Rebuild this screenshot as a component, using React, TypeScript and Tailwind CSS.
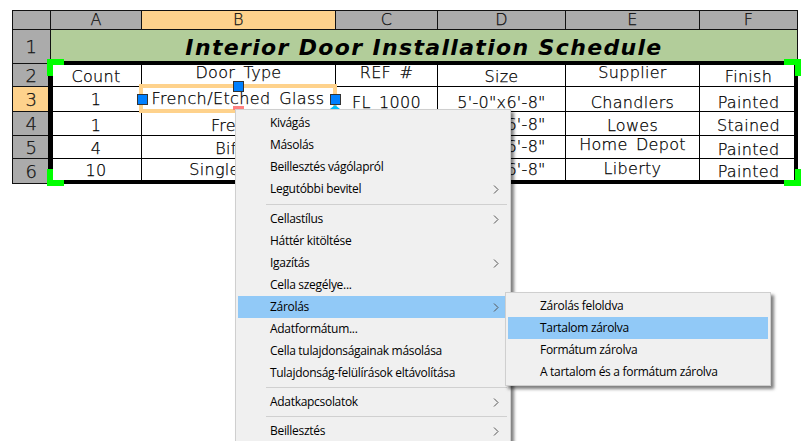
const cadFont = "[font-family:'DejaVu_Sans',sans-serif] font-extralight [-webkit-text-stroke:0.25px_black]";

const mainItems = [
  { label: "Kivágás" },
  { label: "Másolás" },
  { label: "Beillesztés vágólapról" },
  { label: "Legutóbbi bevitel", arrow: true },
  { sep: "h-[8px]" },
  { label: "Cellastílus", arrow: true },
  { label: "Háttér kitöltése" },
  { label: "Igazítás", arrow: true },
  { label: "Cella szegélye..." },
  { label: "Zárolás", arrow: true, active: true },
  { label: "Adatformátum..." },
  { label: "Cella tulajdonságainak másolása" },
  { label: "Tulajdonság-felülírások eltávolítása" },
  { sep: "h-[7px]" },
  { label: "Adatkapcsolatok", arrow: true },
  { sep: "h-[7px]" },
  { label: "Beillesztés", arrow: true },
];

const subItems = [
  { label: "Zárolás feloldva" },
  { label: "Tartalom zárolva", active: true },
  { label: "Formátum zárolva" },
  { label: "A tartalom és a formátum zárolva" },
];

const rows = [
  [
    ["Count", "pt-[4px]"],
    ["Door Type", "pb-[4px]"],
    ["REF #", "pb-[4px]"],
    ["Size", "pt-[4px]"],
    ["Supplier", "pb-[4px]"],
    ["Finish", "pt-[4px]"],
  ],
  [
    ["1", "pt-[2px]"],
    ["", ""],
    ["FL 1000", "pt-[8px]"],
    ["5'-0\"x6'-8\"", "pt-[8px]"],
    ["Chandlers", "pt-[8px]"],
    ["Painted", "pt-[8px]"],
  ],
  [
    ["1", "pt-[4px]"],
    ["French", "pt-[4px]"],
    ["", ""],
    ["2'-6\"x6'-8\"", "pt-[2px]"],
    ["Lowes", "pt-[4px]"],
    ["Stained", "pt-[4px]"],
  ],
  [
    ["4", "pt-[3px]"],
    ["Bifold", "pt-[3px]"],
    ["", ""],
    ["2'-6\"x6'-8\"", "pb-[1px]"],
    ["Home Depot", "pb-[5px]"],
    ["Painted", "pt-[5px]"],
  ],
  [
    ["10", ""],
    ["Single Door", "pb-[2px]"],
    ["", ""],
    ["2'-6\"x6'-8\"", "pb-[3px]"],
    ["Liberty", "pb-[4px]"],
    ["Painted", "pt-[1px]"],
  ],
];

function Arrow() {
  return (
    <svg width="6" height="9" viewBox="0 0 6 9" className="ml-auto mr-[9px]">
      <path d="M1 0.5 L5 4.5 L1 8.5" fill="none" stroke="#555" strokeWidth="1" />
    </svg>
  );
}

function MenuRow({ label, arrow, active }: { label?: string; arrow?: boolean; active?: boolean }) {
  return (
    <div
      className={`flex h-[22px] items-center pl-[32px] text-[12px] text-black [font-family:'Open_Sans',sans-serif] tracking-[-0.3px] whitespace-nowrap ${
        active ? "bg-[#91c9f7]" : ""
      }`}
    >
      {label}
      {arrow && <Arrow />}
    </div>
  );
}

function Separator({ height }: { height: string }) {
  return (
    <div className={`flex items-center pl-[28px] pr-[1px] ${height}`}>
      <div className="h-px w-full bg-[#d0d0d0]" />
    </div>
  );
}

function Grip({ className }: { className: string }) {
  return <div className={`absolute h-[11px] w-[11px] border border-[#333] bg-[#0080ff] ${className}`} />;
}

function Corner({ className }: { className: string }) {
  return <div className={`absolute h-[17px] w-[17px] border-[#00ff00] ${className}`} />;
}

function HeaderCell({ children, active, className = "" }: { children: string; active?: boolean; className?: string }) {
  return (
    <div
      className={`flex items-center justify-center border-r border-b border-[#111] text-[#222] ${cadFont} ${
        active ? "bg-[#fed28c]" : "bg-[#ababab]"
      } ${className}`}
    >
      {children}
    </div>
  );
}

export default function App() {
  return (
    <div className="relative h-[441px] w-[808px] overflow-hidden bg-white pl-[12px] pt-[10px]">
      {/* Table */}
      <div className="grid w-fit grid-cols-[38px_91px_194px_102px_128px_134px_98px] grid-rows-[19px_34px_23px_25px_24px_23px_25px] border-l border-t border-[#111] text-[16px] tracking-[0.3px] [word-spacing:3px]">
        <HeaderCell> </HeaderCell>
        {["A", "B", "C", "D", "E", "F"].map((col) => (
          <HeaderCell key={col} active={col === "B"}>
            {col}
          </HeaderCell>
        ))}

        <HeaderCell className="text-[18px]">1</HeaderCell>
        <div className="col-span-6 flex items-center justify-center border-r border-[#111] bg-[#b2cd9a] pt-[1px] text-[22px] font-bold italic tracking-[1.34px] [word-spacing:0] text-black [font-family:'DejaVu_Sans',sans-serif]">
          Interior Door Installation Schedule
        </div>

        {rows.map((row, i) => (
          <div key={i} className="contents">
            <HeaderCell active={i === 1} className="text-[18px]">
              {String(i + 2)}
            </HeaderCell>
            {row.map(([text, offset], j) => (
              <div
                key={j}
                className={`flex items-center justify-center whitespace-nowrap border-r border-b border-black bg-white text-black ${cadFont} ${offset}`}
              >
                {text}
              </div>
            ))}
          </div>
        ))}
      </div>

      {/* Thick selection frame */}
      <div className="absolute left-[48px] top-[61px] h-[123px] w-[750px] border-y-[4px] border-l-[5px] border-r-[4px] border-black" />

      {/* Selected cell */}
      <div
        className={`absolute left-[139px] top-[84px] flex h-[29px] w-[198px] items-center justify-center whitespace-nowrap border-[4px] border-[#fed28c] bg-white text-[16px] tracking-[0.4px] [word-spacing:3px] text-black ${cadFont}`}
      >
        French/Etched Glass
      </div>
      <Grip className="left-[137px] top-[94px]" />
      <Grip className="left-[233px] top-[81px]" />
      <Grip className="left-[330px] top-[94px]" />
      <div className="absolute left-[233px] top-[106px] h-[4px] w-[11px] bg-[#ff8080]" />
      <div className="absolute left-[330px] top-[105px] h-0 w-0 border-x-[5px] border-b-[4px] border-x-transparent border-b-[#00bfff]" />

      <Corner className="left-[47px] top-[59px] border-l-[6px] border-t-[6px]" />
      <Corner className="left-[784px] top-[59px] border-r-[6px] border-t-[6px]" />
      <Corner className="left-[47px] top-[169px] border-b-[6px] border-l-[6px]" />
      <Corner className="left-[784px] top-[169px] border-b-[6px] border-r-[6px]" />

      {/* Context menu */}
      <div className="absolute left-[235px] top-[109px] w-[276px] border border-[#cfcfcf] bg-[#f0f0f0] p-[2px] pb-0 shadow-[3px_3px_3px_rgba(0,0,0,0.5)]">
        {mainItems.map((item, i) =>
          item.sep ? <Separator key={i} height={item.sep} /> : <MenuRow key={i} {...item} />
        )}
      </div>

      {/* Submenu */}
      <div className="absolute left-[505px] top-[292px] w-[266px] border border-[#cfcfcf] bg-[#f0f0f0] p-[2px] shadow-[3px_3px_3px_rgba(0,0,0,0.5)]">
        {subItems.map((item) => (
          <MenuRow key={item.label} {...item} />
        ))}
      </div>
    </div>
  );
}
